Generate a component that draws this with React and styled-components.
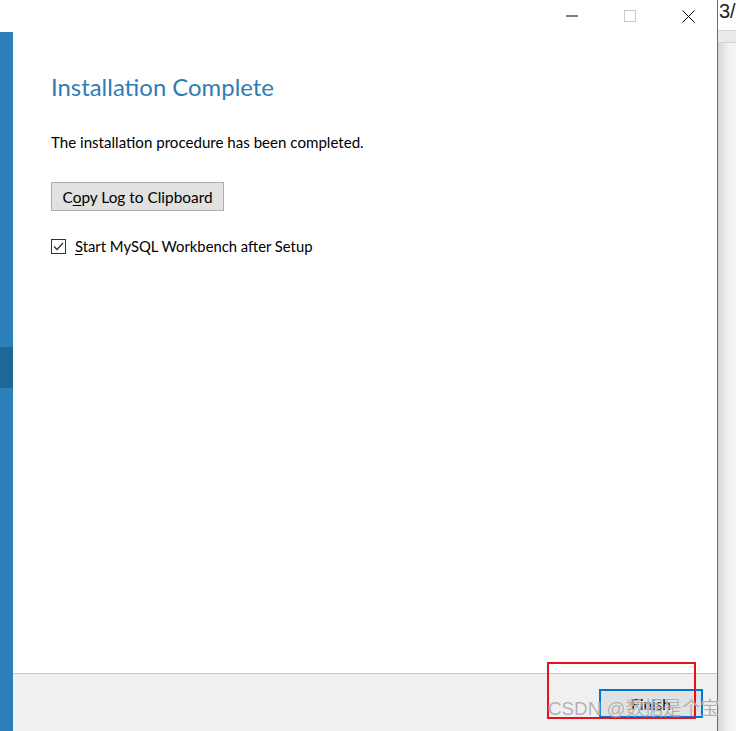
import styled, { createGlobalStyle } from "styled-components";

const Global = createGlobalStyle`
  html, body { margin: 0; padding: 0; background: #ffffff; }
  body { font-family: Lato, "Noto Sans", sans-serif; color: #000; }
  #root { width: 736px; height: 731px; overflow: hidden; }
`

const Screen = styled.div`
  position: relative;
  display: flex;
  width: 736px;
  height: 731px;
`

const Window = styled.div`
  display: flex;
  flex-direction: column;
  width: 717px;
  height: 100%;
  background: #fff;
  border-right: 1px solid #1883d7;
`

const TitleBar = styled.div`
  display: flex;
  justify-content: flex-end;
  height: 32px;
  flex-shrink: 0;
`

const Control = styled.div`
  width: 58px;
  height: 32px;
  display: flex;
  align-items: center;
  justify-content: center;
`

const Body = styled.div`
  display: flex;
  flex: 1;
`

const Sidebar = styled.div`
  width: 13px;
  flex-shrink: 0;
  background: #2b80b9;
  display: flex;
  flex-direction: column;
  padding-top: 315px;
`

const SideMark = styled.div`
  height: 41px;
  background: #1c6898;
`

const Content = styled.div`
  flex: 1;
  display: flex;
  flex-direction: column;
`

const Main = styled.div`
  flex: 1;
  padding: 40px 0 0 38px;
`

const Title = styled.h1`
  margin: 0;
  font-family: Lato, "Noto Sans", sans-serif;
  font-weight: 400;
  font-size: 23.9px;
  line-height: 30px;
  color: #2f7db3;
`

const Text = styled.p`
  margin: 31px 0 0;
  font-size: 15.1px;
  line-height: 19px;
  color: #000;
`

const Button = styled.div`
  display: inline-flex;
  align-items: center;
  justify-content: center;
  box-sizing: border-box;
  height: ${p => p.h || 30}px;
  width: ${p => p.w}px;
  background: #e1e1e1;
  border: ${p => p.focus ? "2px solid #0078d7" : "1px solid #adadad"};
  font-size: 15.4px;
  color: #000;
`

const CopyButton = styled(Button)`
  margin-top: 30px;
`

const CheckRow = styled.div`
  display: flex;
  align-items: center;
  gap: 9px;
  margin-top: 26px;
  margin-left: 0;
  font-size: 14.8px;
  line-height: 18px;
`

const Box = styled.div`
  width: 13px;
  height: 13px;
  border: 1px solid #333;
  display: flex;
  align-items: center;
  justify-content: center;
`

const U = styled.span`
  text-decoration: underline;
  text-underline-offset: 2px;
`

const Footer = styled.div`
  height: 58px;
  flex-shrink: 0;
  background: #f0f0f0;
  border-top: 1px solid #c8c8c8;
  display: flex;
  justify-content: flex-end;
  padding: 15px 14px 0 0;
  box-sizing: border-box;
`

const Side = styled.div`
  flex: 1;
  background: linear-gradient(to right, #d6d6d6, #f2f2f2 60%, #f5f5f5);
  display: flex;
  flex-direction: column;
`

const SideText = styled.div`
  height: 30px;
  background: #fff;
  font-size: 20px;
  line-height: 22px;
  padding-left: 1px;
  font-family: "Liberation Sans", sans-serif;
  color: #222;
  border-bottom: 1px solid #cfcfcf;
`

const SideTab = styled.div`
  height: 11px;
  border-bottom: 1px solid #d4d4d4;
  background: #ebebeb;
`

const Highlight = styled.div`
  position: absolute;
  left: 547px;
  top: 662px;
  width: 149px;
  height: 57px;
  box-sizing: border-box;
  border: 2px solid #e8101c;
`

const Watermark = styled.div`
  position: absolute;
  left: 548px;
  top: 697px;
  font-family: "Liberation Sans", "Noto Sans CJK SC", sans-serif;
  font-size: 18.8px;
  line-height: 24px;
  color: rgba(150, 150, 150, 0.75);
  text-shadow: 0 0 1px rgba(255,255,255,0.9);
  white-space: nowrap;
`

export default function App() {
  return (
    <Screen>
      <Global />
      <Window>
        <TitleBar>
          <Control>
            <svg width="12" height="2"><line x1="0" y1="1" x2="12" y2="1" stroke="#000" strokeWidth="1" /></svg>
          </Control>
          <Control>
            <svg width="12" height="12"><rect x="0.5" y="0.5" width="11" height="11" fill="none" stroke="#c8c8c8" /></svg>
          </Control>
          <Control>
            <svg width="13" height="13"><path d="M0.5 0.5 L12.5 12.5 M12.5 0.5 L0.5 12.5" stroke="#000" strokeWidth="1" /></svg>
          </Control>
        </TitleBar>
        <Body>
          <Sidebar>
            <SideMark />
          </Sidebar>
          <Content>
            <Main>
              <Title>Installation Complete</Title>
              <Text>The installation procedure has been completed.</Text>
              <CopyButton w={173} h={29}>C<U>o</U>py Log to Clipboard</CopyButton>
              <CheckRow>
                <Box>
                  <svg width="11" height="9" viewBox="0 0 11 9">
                    <path d="M1 4.5 L4 7.5 L10 1" fill="none" stroke="#333" strokeWidth="1.3" />
                  </svg>
                </Box>
                <span><U>S</U>tart MySQL Workbench after Setup</span>
              </CheckRow>
            </Main>
            <Footer>
              <Button focus w={104} h={29}>Finish</Button>
            </Footer>
          </Content>
        </Body>
      </Window>
      <Side>
        <SideText>3/</SideText>
        <SideTab />
      </Side>
      <Highlight />
      <Watermark>CSDN @数据是个宝</Watermark>
    </Screen>
  );
}
